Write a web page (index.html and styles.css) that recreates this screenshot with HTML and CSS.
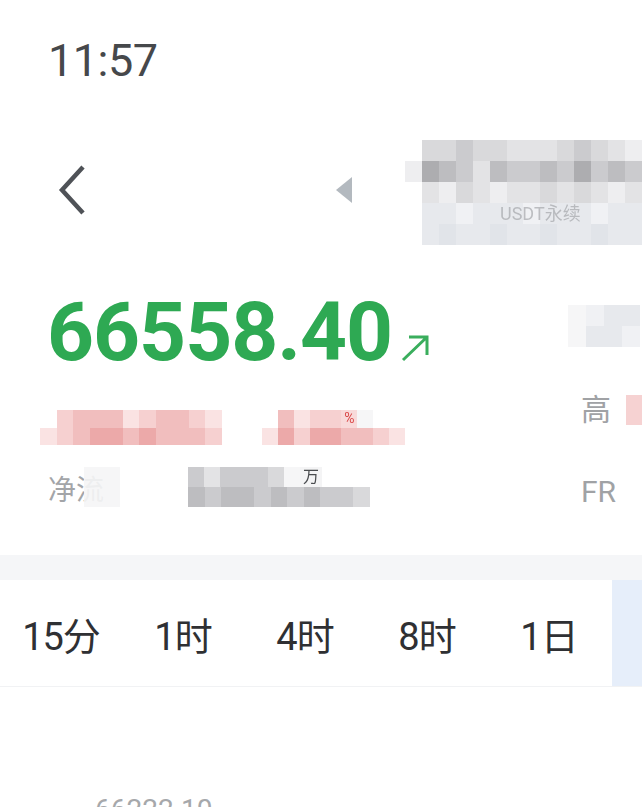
FILE: index.html
```html
<!DOCTYPE html>
<html lang="zh-CN">
<head>
<meta charset="UTF-8" />
<meta name="viewport" content="width=device-width, initial-scale=1" />
<title>行情</title>
<link rel="stylesheet" href="styles.css">
</head>
<body>

<div class="status">
  <span class="time">11:57</span>
</div>

<div class="nav">
  <svg class="back" viewBox="0 0 30 52" aria-hidden="true">
    <path d="M27 3 L6 26 L27 49" fill="none" stroke="#4f5257" stroke-width="4.5" stroke-linejoin="miter"/>
  </svg>
  <svg class="switch-arrow" viewBox="0 0 16 26" aria-hidden="true">
    <path d="M16 0 L16 26 L0 13 Z" fill="#b3b9bf"/>
  </svg>
  <div class="mosaic title-mosaic">
    <div class="mrow">
      <span class="w0"></span><span class="g2"></span><span class="g2"></span><span class="g3"></span><span class="g2"></span><span class="g2"></span><span class="g1"></span><span class="g1"></span><span class="g1"></span><span class="g2"></span><span class="g3"></span><span class="g2"></span><span class="g1"></span><span class="g0"></span>
    </div>
    <div class="mrow">
      <span class="g0"></span><span class="g5"></span><span class="g4"></span><span class="g3"></span><span class="g1"></span><span class="g4"></span><span class="g3"></span><span class="g3"></span><span class="g4"></span><span class="g3"></span><span class="g5"></span><span class="g3"></span><span class="g4"></span><span class="g3"></span>
    </div>
    <div class="mrow">
      <span class="w0"></span><span class="g1"></span><span class="g0"></span><span class="g2"></span><span class="g1"></span><span class="g0"></span><span class="g1"></span><span class="g1"></span><span class="g2"></span><span class="g1"></span><span class="g2"></span><span class="g1"></span><span class="g0"></span><span class="g1"></span>
    </div>
    <div class="mrow sub">
      <span class="w0"></span><span class="b1"></span><span class="b1"></span><span class="b0"></span><span class="b1"></span><span class="b1"></span><span class="b1"></span><span class="b0"></span><span class="b1"></span><span class="b1"></span><span class="b1"></span><span class="b0"></span><span class="b1"></span><span class="b1"></span>
      <em class="sub-text">USDT永续</em>
    </div>
    <div class="mrow">
      <span class="w0"></span><span class="b1"></span><span class="b2"></span><span class="b1"></span><span class="b1"></span><span class="b2"></span><span class="b1"></span><span class="b1"></span><span class="b2"></span><span class="b1"></span><span class="b1"></span><span class="b2"></span><span class="b1"></span><span class="b1"></span>
    </div>
  </div>
</div>

<div class="quote">
  <div class="quote-main">
    <div class="price">
      66558.40
      <svg class="trend" viewBox="0 0 30 28" aria-hidden="true">
        <path d="M3 26 L27 3 M9 3 L27 3 L27 21" fill="none" stroke="#3aae5d" stroke-width="3"/>
      </svg>
    </div>

    <div class="pink-line">
      <div class="mosaic pink-a">
        <div class="mrow">
          <span class="w0"></span><span class="p1"></span><span class="p2"></span><span class="p2"></span><span class="p2"></span><span class="p0"></span><span class="p1"></span><span class="p2"></span><span class="p2"></span><span class="p1"></span><span class="p0"></span>
        </div>
        <div class="mrow">
          <span class="p0"></span><span class="p1"></span><span class="p2"></span><span class="p3"></span><span class="p3"></span><span class="p2"></span><span class="p3"></span><span class="p2"></span><span class="p2"></span><span class="p2"></span><span class="p1"></span>
        </div>
      </div>
      <div class="mosaic pink-b">
        <div class="mrow">
          <span class="w0"></span><span class="p2"></span><span class="p0"></span><span class="p1"></span><span class="p1"></span><span class="pct">%</span><span class="w1"></span><span class="w0"></span><span class="w0"></span>
        </div>
        <div class="mrow">
          <span class="p0"></span><span class="p3"></span><span class="p1"></span><span class="p3"></span><span class="p3"></span><span class="p2"></span><span class="p2"></span><span class="p1"></span><span class="p0"></span>
        </div>
      </div>
    </div>

    <div class="flow-line">
      <span class="label">净流</span>
      <div class="mosaic flow-a">
        <div class="mrow"><span class="w1"></span><span class="w1"></span></div>
        <div class="mrow"><span class="w1"></span><span class="w1"></span></div>
      </div>
      <div class="mosaic flow-b">
        <div class="mrow">
          <span class="g3"></span><span class="g1"></span><span class="g3"></span><span class="g3"></span><span class="g3"></span><span class="g2"></span><span class="w1"></span><span class="unit">万</span><span class="w0"></span><span class="w0"></span><span class="w0"></span>
        </div>
        <div class="mrow">
          <span class="g4"></span><span class="g3"></span><span class="g4"></span><span class="g4"></span><span class="g3"></span><span class="g4"></span><span class="g3"></span><span class="g4"></span><span class="g3"></span><span class="g3"></span><span class="g2"></span>
        </div>
      </div>
    </div>
  </div>

  <div class="quote-side">
    <div class="mosaic side-top">
      <div class="mrow"><span class="w1"></span><span class="b0"></span><span class="b1"></span><span class="b1"></span></div>
      <div class="mrow"><span class="w1"></span><span class="b1"></span><span class="b1"></span><span class="b0"></span></div>
    </div>
    <div class="side-row">
      <span class="side-label">高</span><span class="side-pink"></span>
    </div>
    <div class="side-row">
      <span class="side-label">FR</span>
    </div>
  </div>
</div>

<div class="divider"></div>

<div class="tabs">
  <div class="tab">15分</div>
  <div class="tab">1时</div>
  <div class="tab">4时</div>
  <div class="tab">8时</div>
  <div class="tab">1日</div>
  <div class="tab active"></div>
</div>

<div class="chart">
  <span class="chart-price">66222.10</span>
</div>

</body>
</html>
```

FILE: styles.css
```css
* {
  box-sizing: border-box;
}
html, body {
  margin: 0;
  background: #fff;
}
body {
  width: 642px;
  height: 807px;
  overflow: hidden;
  font-family: Roboto, "Noto Sans CJK SC", sans-serif;
  color: #333;
}

/* 状态栏 */
.status {
  height: 125px;
  padding: 38px 0 0 48px;
}
.time {
  display: block;
  font-size: 45px;
  line-height: 1;
  color: #46484b;
  letter-spacing: -0.5px;
}

/* 导航 */
.nav {
  height: 130px;
  display: flex;
  align-items: center;
}
.back {
  width: 30px;
  height: 52px;
  margin-left: 56px;
}
.switch-arrow {
  width: 16px;
  height: 26px;
  margin-left: 250px;
}
.title-mosaic {
  margin-left: 53px;
  width: 237px;
  align-self: flex-start;
  margin-top: 15px;
}

/* 马赛克 */
.mosaic {
  display: flex;
  flex-direction: column;
  filter: blur(0.6px);
}
.mrow {
  display: flex;
  height: 21px;
  position: relative;
}
.mrow span {
  flex: 1;
}
.g0 { background: #eeeef0; }
.g1 { background: #e3e3e5; }
.g2 { background: #d9d9db; }
.g3 { background: #cbcbce; }
.g4 { background: #bdbdc0; }
.g5 { background: #adadb0; }
.b0 { background: #f0f1f4; }
.b1 { background: #e7e9ed; }
.b2 { background: #e1e4e9; }
.w0 { background: #fff; }
.w1 { background: #f6f6f7; }
.p0 { background: #fae3e3; }
.p1 { background: #f6d0d0; }
.p2 { background: #f1bebe; }
.p3 { background: #eca9a9; }
.sub-text {
  position: absolute;
  left: 95px;
  top: 1px;
  font-style: normal;
  font-size: 18px;
  line-height: 20px;
  color: #9a9ca0;
  opacity: 0.6;
  white-space: nowrap;
}

/* 价格区 */
.quote {
  height: 300px;
  display: flex;
}
.quote-main {
  width: 530px;
  padding: 36px 0 0 40px;
}
.price {
  font-size: 82px;
  font-weight: 700;
  line-height: 1;
  color: #2ea953;
  margin-left: 7px;
  letter-spacing: -1px;
  display: flex;
  align-items: flex-end;
}
.trend {
  width: 30px;
  height: 28px;
  margin: 0 0 11px 8px;
}
.pink-line {
  display: flex;
  margin-top: 37px;
}
.pink-line .mrow {
  height: 17.5px;
}
.pink-a {
  width: 182px;
}
.pink-b {
  width: 143px;
  margin-left: 40px;
}
.pct {
  flex: 1;
  background: #f8dada;
  color: #d94848;
  font-size: 14px;
  line-height: 17px;
  text-align: center;
}
.flow-line {
  display: flex;
  align-items: flex-end;
  margin-top: 22px;
  height: 40px;
}
.label {
  font-size: 28px;
  line-height: 1;
  color: #a3a5a8;
  margin-left: 8px;
  margin-bottom: 2px;
}
.flow-line .mrow {
  height: 20px;
}
.flow-a {
  width: 36px;
  margin-left: -20px;
  opacity: 0.9;
}
.flow-b {
  width: 182px;
  margin-left: 68px;
}
.unit {
  flex: 1.4 !important;
  background: #f4f4f5;
  color: #4b4d50;
  font-size: 16px;
  line-height: 20px;
  text-align: center;
}
.quote-side {
  flex: 1;
  padding-top: 50px;
}
.side-top {
  width: 72px;
  margin-left: 40px;
}
.side-row {
  display: flex;
  align-items: center;
  margin-left: 53px;
}
.side-row:nth-child(2) {
  margin-top: 48px;
}
.side-row:nth-child(3) {
  margin-top: 52px;
}
.side-label {
  font-size: 30px;
  line-height: 1;
  color: #a0a2a5;
}
.side-pink {
  width: 16px;
  height: 30px;
  margin-left: 15px;
  background: #f6d2d2;
}

.divider {
  height: 25px;
  background: #f5f6f8;
}

/* 周期切换 */
.tabs {
  display: flex;
  height: 107px;
  border-bottom: 1px solid #f1f2f4;
}
.tab {
  width: 122px;
  display: flex;
  align-items: center;
  justify-content: center;
  font-size: 38px;
  color: #2f3033;
  letter-spacing: -1px;
}
.tab.active {
  flex: 1;
  width: auto;
  margin-left: 2px;
  background: #e6eefa;
}

/* 图表 */
.chart {
  padding: 109px 0 0 95px;
}
.chart-price {
  font-size: 28px;
  line-height: 1;
  color: #a6a8ab;
}
```
